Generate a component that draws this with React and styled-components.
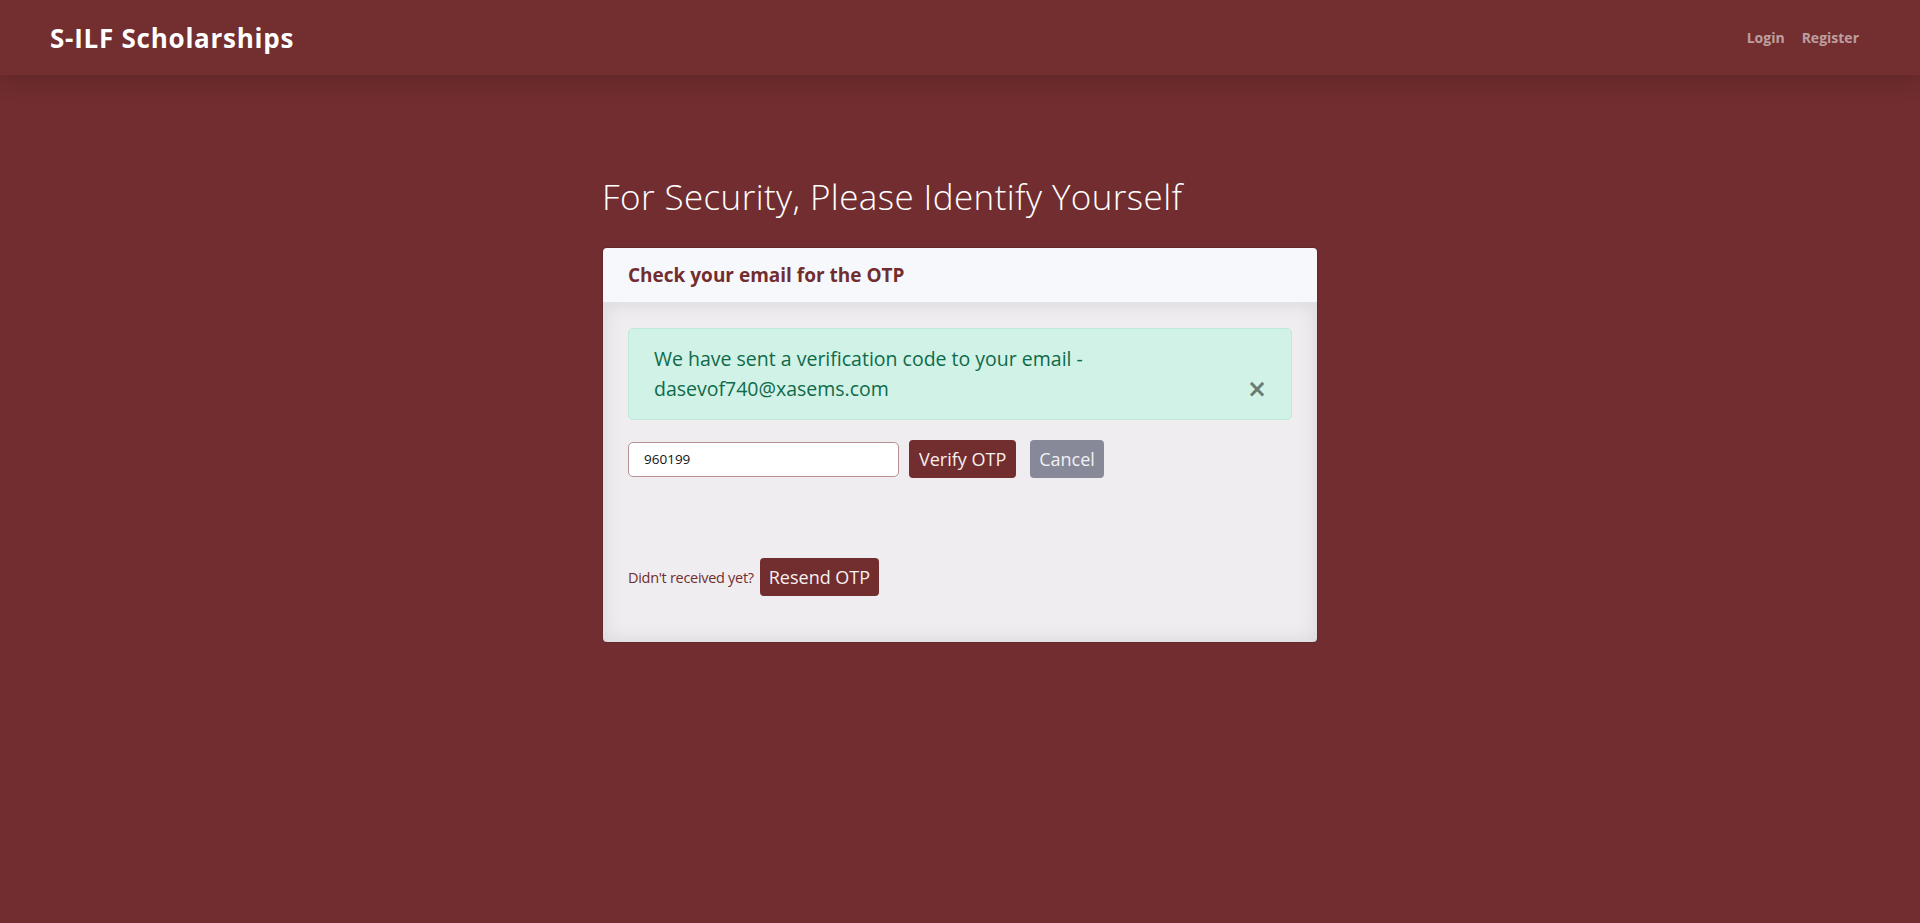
import React from "react";
import styled, { createGlobalStyle } from "styled-components";

const GlobalStyle = createGlobalStyle`
  html, body {
    margin: 0;
    padding: 0;
    background-color: #712d2f;
    font-family: "Open Sans", "Noto Sans", sans-serif;
    font-size: 20px;
  }
  * {
    box-sizing: border-box;
  }
`;

const Page = styled.div`
  min-height: 923px;
  background-color: #712d2f;
`;

const NavBar = styled.nav`
  height: 75px;
  background-color: #732e30;
  display: flex;
  align-items: center;
  justify-content: space-between;
  padding: 0 61px 0 50px;
  box-shadow: 0 4px 22px rgba(0, 0, 0, 0.18);
  position: relative;
`;

const Brand = styled.div`
  color: #fff;
  font-size: 26px;
  font-weight: 700;
  letter-spacing: 0.75px;
`;

const NavLinks = styled.div`
  display: flex;
  gap: 17px;
`;

const NavLink = styled.a`
  color: rgba(255, 255, 255, 0.55);
  font-size: 14px;
  font-weight: 700;
  text-decoration: none;
  cursor: pointer;
`;

const Container = styled.main`
  width: 716px;
  margin: 0 auto;
  padding-top: 101px;
`;

const Title = styled.h2`
  margin: 0 0 29px 0;
  color: #fff;
  font-size: 35px;
  font-weight: 300;
  line-height: 1.2;
  letter-spacing: 0.4px;
`;

const Card = styled.section`
  border-radius: 5px;
  overflow: hidden;
  border: 1px solid rgba(0, 0, 0, 0.1);
`;

const CardHeader = styled.header`
  background-color: #f7f8fc;
  border-bottom: 1px solid #e1e1ea;
  padding: 0 25px;
  height: 55px;
  display: flex;
  align-items: center;
  color: #722d2f;
  font-size: 19px;
  font-weight: 700;
`;

const CardBody = styled.div`
  background-color: #efedf0;
  padding: 25px 25px 46px 25px;
  box-shadow: inset 0 0 20px rgba(0, 0, 0, 0.1);
`;

const Alert = styled.div`
  display: flex;
  align-items: flex-end;
  justify-content: space-between;
  background-color: #d1f2e6;
  border: 1px solid #bfead9;
  border-radius: 5px;
  padding: 15px 25px;
  margin-bottom: 20px;
  color: #0f6a4a;
  font-size: 19.5px;
  line-height: 30px;
`;

const AlertText = styled.p`
  margin: 0;
  flex: 1;
  padding-right: 30px;
`;

const CloseButton = styled.button`
  border: none;
  background: transparent;
  padding: 0;
  color: #6b7a72;
  font-family: "DejaVu Sans", sans-serif;
  font-size: 24px;
  font-weight: 700;
  line-height: 30px;
  margin-right: -1px;
  cursor: pointer;
`;

const FormRow = styled.form`
  display: flex;
  align-items: center;
`;

const OtpInput = styled.input`
  width: 271px;
  height: 35px;
  border: 1px solid #b99090;
  border-radius: 5px;
  background: #fff;
  padding: 0 15px;
  font-family: "Open Sans", "Noto Sans", sans-serif;
  font-size: 13.5px;
  color: #111;
  outline: none;
`;

const Button = styled.button`
  height: 38px;
  border: none;
  border-radius: 4px;
  padding: 0 ${(p) => p.$px || 10}px;
  margin-left: ${(p) => p.$ml || 0}px;
  background-color: ${(p) => (p.$muted ? "#878898" : "#722d2f")};
  color: ${(p) => (p.$muted ? "#f1f1f3" : "#f7f0f0")};
  font-family: "Open Sans", "Noto Sans", sans-serif;
  font-size: 18px;
  cursor: pointer;
`;

const ResendRow = styled.div`
  display: flex;
  align-items: center;
  margin-top: 80px;
`;

const ResendText = styled.span`
  color: #722d2f;
  font-size: 14.5px;
  letter-spacing: -0.3px;
  margin-right: 6px;
`;

export default function App() {
  return (
    <Page>
      <GlobalStyle />
      <NavBar>
        <Brand>S-ILF Scholarships</Brand>
        <NavLinks>
          <NavLink>Login</NavLink>
          <NavLink>Register</NavLink>
        </NavLinks>
      </NavBar>
      <Container>
        <Title>For Security, Please Identify Yourself</Title>
        <Card>
          <CardHeader>Check your email for the OTP</CardHeader>
          <CardBody>
            <Alert>
              <AlertText>
                We have sent a verification code to your email -
                dasevof740@xasems.com
              </AlertText>
              <CloseButton type="button" aria-label="Close">
                ×
              </CloseButton>
            </Alert>
            <FormRow onSubmit={(e) => e.preventDefault()}>
              <OtpInput defaultValue="960199" />
              <Button $ml={10} $px={10}>Verify OTP</Button>
              <Button $ml={14} $px={9} $muted type="button">
                Cancel
              </Button>
            </FormRow>
            <ResendRow>
              <ResendText>Didn't received yet?</ResendText>
              <Button $px={9}>Resend OTP</Button>
            </ResendRow>
          </CardBody>
        </Card>
      </Container>
    </Page>
  );
}
